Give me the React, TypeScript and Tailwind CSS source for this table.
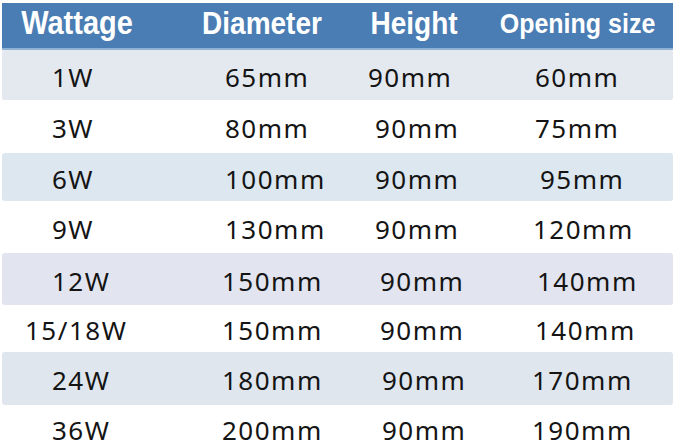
import React from "react";

type Row = {
  cells: [string, string, string, string];
  pads: [string, string, string, string];
  h: string;
  bg: string;
};

const rows: Row[] = [
  { cells: ["1W", "65mm", "90mm", "60mm"], pads: ["pl-[50px]", "pl-[3px]", "pl-0", "pl-[5px]"], h: "h-[50px]", bg: "bg-[#e4e9f0] rounded-[2px]" },
  { cells: ["3W", "80mm", "90mm", "75mm"], pads: ["pl-[50px]", "pl-[3px]", "pl-[7px]", "pl-[5px]"], h: "h-[53px]", bg: "" },
  { cells: ["6W", "100mm", "90mm", "95mm"], pads: ["pl-[50px]", "pl-[3px]", "pl-[7px]", "pl-[10px]"], h: "h-[48px]", bg: "bg-[#dde7ef] rounded-[3px]" },
  { cells: ["9W", "130mm", "90mm", "120mm"], pads: ["pl-[50px]", "pl-[3px]", "pl-[7px]", "pl-[3px]"], h: "h-[52px]", bg: "" },
  { cells: ["12W", "150mm", "90mm", "140mm"], pads: ["pl-[50px]", "pl-0", "pl-[12px]", "pl-[7px]"], h: "h-[52px]", bg: "bg-[#e2e5f0] rounded-[3px]" },
  { cells: ["15/18W", "150mm", "90mm", "140mm"], pads: ["pl-[23px]", "pl-0", "pl-[12px]", "pl-[5px]"], h: "h-[47px]", bg: "" },
  { cells: ["24W", "180mm", "90mm", "170mm"], pads: ["pl-[50px]", "pl-0", "pl-[14px]", "pl-[2px]"], h: "h-[53px]", bg: "bg-[#dfe6ee] rounded-[3px]" },
  { cells: ["36W", "200mm", "90mm", "190mm"], pads: ["pl-[50px]", "pl-0", "pl-[14px]", "pl-[2px]"], h: "h-[46px]", bg: "" },
];

const colW = ["w-[220px]", "w-[146px]", "w-[162px]", "w-[141px]"];

export default function App() {
  return (
    <div className="w-[679px] h-[445px] overflow-hidden bg-white pt-[3px] pl-[2px] pr-[6px]">
      <div className="flex h-[47px] items-center bg-[#4a7db3] border-b-2 border-[#8fb2d4] pb-[4px] text-white font-bold whitespace-nowrap" style={{ fontFamily: '"Liberation Sans", Arial, sans-serif' }}>
        <div className="w-[150px] flex justify-center text-[29px] scale-y-[1.12]">Wattage</div>
        <div className="w-[226px] flex justify-center text-[28px] scale-y-[1.12] pr-[6px]">Diameter</div>
        <div className="w-[74px] flex justify-center text-[28px] scale-y-[1.12] pr-[2px]">Height</div>
        <div className="w-[221px] flex justify-center text-[25px] scale-y-[1.12] pl-[30px]">Opening size</div>
      </div>
      {rows.map((r, i) => (
        <div
          key={i}
          className={`flex items-center ${r.h} ${r.bg} text-[26px] tracking-[1.5px] text-[#141414] whitespace-nowrap pt-[4px]`}
          style={{ fontFamily: '"Noto Sans", "Noto Sans CJK SC", sans-serif' }}
        >
          {r.cells.map((c, j) => (
            <div key={j} className={`${colW[j]} ${r.pads[j]}`}>
              {c}
            </div>
          ))}
        </div>
      ))}
    </div>
  );
}
